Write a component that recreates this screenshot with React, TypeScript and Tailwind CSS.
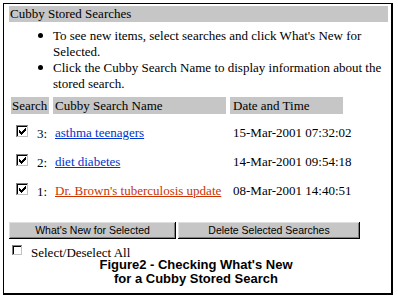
import React from "react";

const CHECK = [
  "......X",
  ".....XX",
  "X...XXX",
  "XX.XXX.",
  "XXXXX..",
  ".XXX...",
  "..X....",
];

function CheckBox({ checked, size = 13 }: { checked: boolean; size?: number }) {
  const s = size;
  const rects: React.ReactNode[] = [];
  if (checked) {
    const off = Math.floor((s - 7) / 2);
    CHECK.forEach((row, y) =>
      row.split("").forEach((c, x) => {
        if (c === "X")
          rects.push(<rect key={`${x}-${y}`} x={off + x} y={off + y} width={1} height={1} fill="#000" />);
      })
    );
  }
  return (
    <svg width={s} height={s} viewBox={`0 0 ${s} ${s}`} shapeRendering="crispEdges" className="shrink-0 block">
      <rect x={0} y={0} width={s} height={s} fill="#fff" />
      <rect x={0} y={0} width={s - 1} height={1} fill="#808080" />
      <rect x={0} y={0} width={1} height={s - 1} fill="#808080" />
      <rect x={1} y={1} width={s - 3} height={1} fill="#000" />
      <rect x={1} y={1} width={1} height={s - 3} fill="#000" />
      <rect x={1} y={s - 2} width={s - 2} height={1} fill="#c0c0c0" />
      <rect x={s - 2} y={1} width={1} height={s - 2} fill="#c0c0c0" />
      {rects}
    </svg>
  );
}

const rows = [
  { n: "3:", name: "asthma teenagers", date: "15-Mar-2001 07:32:02", visited: false },
  { n: "2:", name: "diet diabetes", date: "14-Mar-2001 09:54:18", visited: false },
  { n: "1:", name: "Dr. Brown's tuberculosis update", date: "08-Mar-2001 14:40:51", visited: true },
];

export default function App() {
  return (
    <div className="w-[398px] h-[297px] bg-white pl-[3px] pt-[3px] text-black" style={{ fontFamily: '"Liberation Serif", "Times New Roman", serif' }}>
      <div className="w-[390px] h-[292px] border-l border-t border-r-2 border-b-2 border-black pl-[5px] pt-[2px] text-[13px]">
        <div className="w-[379px] h-[16px] bg-[#c6c6c6] pl-[1px] leading-[16px]">Cubby Stored Searches</div>

        <div className="mt-[6px] w-[379px] leading-[16px]">
          {[
            "To see new items, select searches and click What's New for Selected.",
            "Click the Cubby Search Name to display information about the stored search.",
          ].map((t) => (
            <div key={t} className="flex">
              <div className="w-[44px] shrink-0 flex justify-end pr-[10px] pt-[5px]">
                <div className="w-[5px] h-[5px] rounded-full bg-black" />
              </div>
              <div className="flex-1">{t}</div>
            </div>
          ))}
        </div>

        <div className="mt-[5px] ml-[2px] grid grid-cols-[38px_173px_113px] gap-x-[4px] gap-y-[4px]">
          <div className="h-[17px] bg-[#c6c6c6] leading-[17px] pl-[1px]">Search</div>
          <div className="h-[17px] bg-[#c6c6c6] leading-[17px] pl-[2px]">Cubby Search Name</div>
          <div className="h-[17px] bg-[#c6c6c6] leading-[17px] pl-[3px]">Date and Time</div>
          {rows.map((r) => (
            <React.Fragment key={r.n}>
              <div className="h-[25px] flex items-center pl-[5px] pt-[2px]">
                <CheckBox checked />
                <span className="ml-[8px] pt-[3px] leading-[15px]">{r.n}</span>
              </div>
              <div className="h-[25px] flex items-center pl-[2px] pt-[3px] whitespace-nowrap">
                <a href="#" className={`underline leading-[15px] ${r.visited ? "text-[#cc3300]" : "text-[#0033cc]"}`}>
                  {r.name}
                </a>
              </div>
              <div className="h-[25px] flex items-center pl-[3px] pt-[3px] whitespace-nowrap leading-[15px]">{r.date}</div>
            </React.Fragment>
          ))}
        </div>

        <div className="mt-[21px] flex gap-[2px]" style={{ fontFamily: '"Liberation Sans", Arial, sans-serif' }}>
          <div className="w-[167px] h-[17px] bg-[#c6c6c6] text-[10.5px] leading-[17px] text-center shadow-[inset_-1px_-1px_#000,inset_1px_1px_#dfdfdf,inset_-2px_-2px_#808080]">
            What's New for Selected
          </div>
          <div className="w-[182px] h-[17px] bg-[#c6c6c6] text-[10.5px] leading-[17px] text-center shadow-[inset_-1px_-1px_#000,inset_1px_1px_#dfdfdf,inset_-2px_-2px_#808080]">
            Delete Selected Searches
          </div>
        </div>

        <div className="mt-[4px] flex items-center h-[15px] pl-[3px]">
          <CheckBox checked={false} size={11} />
          <span className="ml-[8px] leading-[15px] pt-[3px]">Select/Deselect All</span>
        </div>

        <div
          className="pr-[8px] text-center font-bold text-[13px] leading-[14px]"
          style={{ fontFamily: '"Liberation Sans", Arial, sans-serif' }}
        >
          <div>Figure2 - Checking What's New</div>
          <div>for a Cubby Stored Search</div>
        </div>
      </div>
    </div>
  );
}
